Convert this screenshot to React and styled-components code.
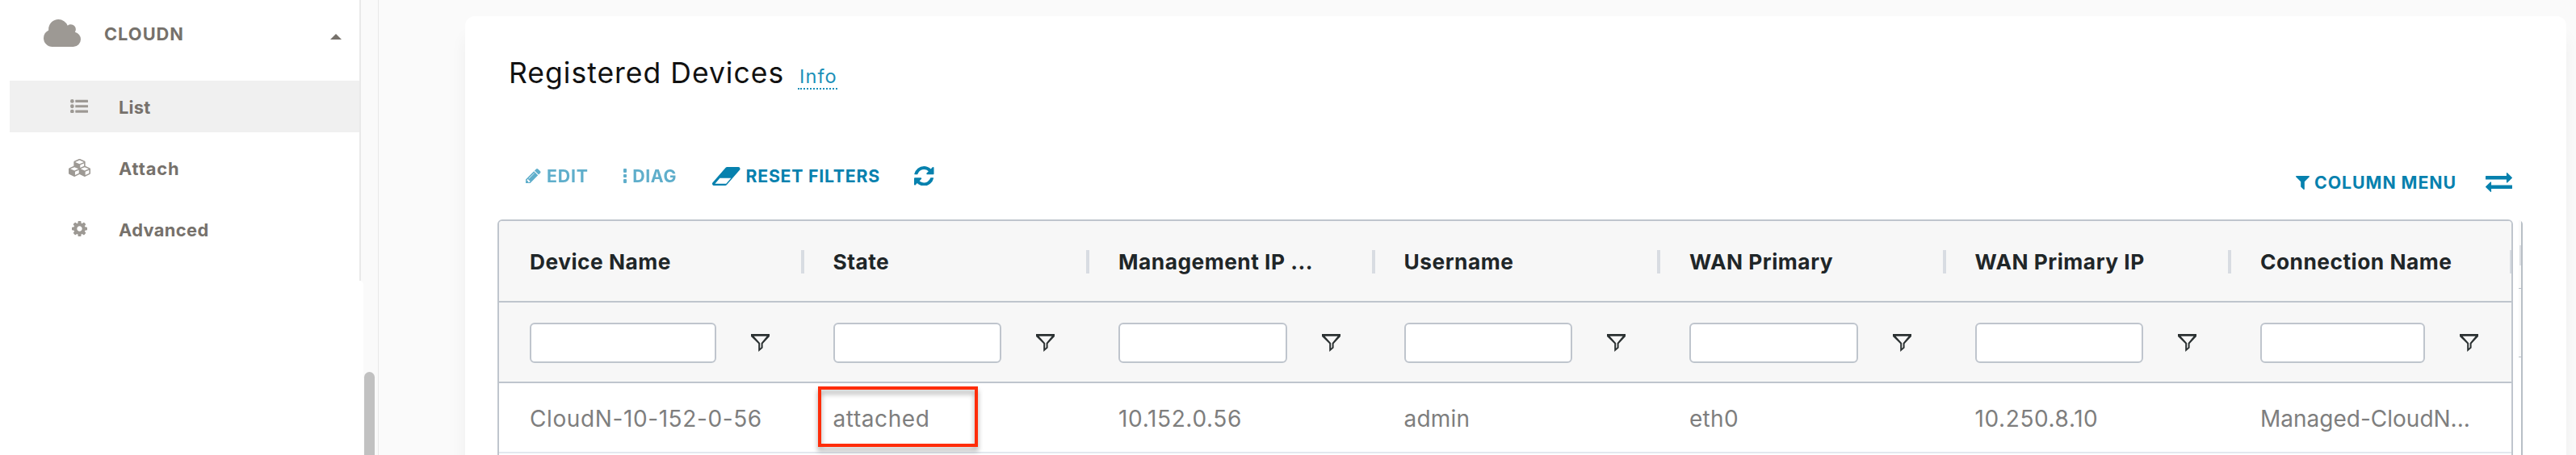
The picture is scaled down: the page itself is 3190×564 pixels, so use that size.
import React from "react";
import styled, { createGlobalStyle } from "styled-components";

const GlobalStyle = createGlobalStyle`
  * { box-sizing: border-box; }
  body { margin: 0; background: #fafafa; font-family: Inter, "Liberation Sans", sans-serif; overflow: hidden; }
`;

const Page = styled.div`
  display: flex;
  width: 3190px;
  height: 564px;
  overflow: hidden;
  background: #fafafa;
`;

/* ---------- sidebar ---------- */
const Sidebar = styled.nav`
  flex: none;
  display: flex;
  flex-direction: column;
  width: 450px;
  height: 564px;
`;

const Menu = styled.div`
  width: 447px;
  height: 348px;
  background: #fff;
  border-right: 2px solid #e9e9e9;
`;

const MenuFooter = styled.div`
  flex: 1;
  width: 450px;
  background: #fff;
  border-top-right-radius: 5px;
`;

const Group = styled.div`
  display: flex;
  align-items: center;
  height: 84px;
  margin-bottom: 16px;
  padding: 0 22px 0 54px;
`;

const GroupLabel = styled.span`
  flex: 1;
  margin: 0 0 0 29px;
  color: #76716b;
  font-size: 21.8px;
  font-weight: 700;
  line-height: 28px;
  letter-spacing: 1px;
`;

const Caret = styled.i`
  margin-top: 7px;
  border: 7px solid transparent;
  border-top: 0;
  border-bottom: 7px solid #76716b;
`;

const Item = styled.div`
  display: flex;
  align-items: center;
  height: 64px;
  margin: 0 0 12px 12px;
  background: ${(p) => (p.$active ? "#f0f0f0" : "transparent")};
`;

const ItemIcon = styled.span`
  display: flex;
  justify-content: center;
  width: 30px;
  margin: -1px 0 0 71px;
  color: #9d9994;
`;

const ItemLabel = styled.span`
  margin: 2px 0 0 34px;
  color: #76716b;
  font-size: 21.8px;
  font-weight: 700;
  line-height: 28px;
  letter-spacing: ${(p) => p.$track || 0}px;
`;

const ScrollTrack = styled.div`
  flex: none;
  display: flex;
  align-items: flex-end;
  width: 19px;
  height: 564px;
  padding-left: 1px;
  border-right: 1px solid #e9e9e9;
`;

const ScrollThumb = styled.div`
  width: 13px;
  height: 103px;
  border-radius: 7px 7px 0 0;
  background: #c1c1c1;
`;

/* ---------- content card ---------- */
const Card = styled.main`
  width: 2602px;
  height: 600px;
  margin: 20px 0 0 107px;
  padding: 0 53px 0 40px;
  border-radius: 12px;
  background: #fff;
  box-shadow: 0 24px 20px rgba(0, 0, 0, 0.05);
`;

const Heading = styled.header`
  display: flex;
  align-items: baseline;
  height: 163px;
  padding: 50px 0 0 14px;
`;

const Title = styled.h1`
  width: 340px;
  margin: 0;
  color: #111;
  font-size: 35.5px;
  font-weight: 400;
  line-height: 42px;
  letter-spacing: 1px;
  white-space: nowrap;
`;

const InfoLink = styled.a`
  margin-left: 18px;
  padding: 0 0 0 2px;
  border-bottom: 2px dotted #1a8fb8;
  color: #1a8fb8;
  font-size: 23.5px;
  font-weight: 400;
  line-height: 29px;
  letter-spacing: 1.1px;
`;

const Toolbar = styled.div`
  display: flex;
  justify-content: space-between;
  height: 89px;
  padding: 20px 14px 0 35px;
`;

const ToolGroup = styled.div`
  display: flex;
  align-items: center;
  height: 30px;
  margin-top: ${(p) => p.$drop || 0}px;
`;

const Tool = styled.span`
  display: flex;
  align-items: center;
  gap: ${(p) => p.$gap || 0}px;
  margin-left: ${(p) => p.$before || 0}px;
  color: #0681ae;
  opacity: ${(p) => (p.$disabled ? 0.64 : 1)};
  font-size: 21.3px;
  font-weight: 700;
  line-height: 28px;
  letter-spacing: ${(p) => p.$track || 0}px;
  white-space: nowrap;
`;

const Dots = styled.span`
  display: flex;
  flex-direction: column;
  gap: 2px;
`;

const Dot = styled.i`
  width: 4.5px;
  height: 4.5px;
  border-radius: 1px;
  background: currentColor;
`;

/* ---------- grid ---------- */
const GridArea = styled.div`
  display: flex;
  align-items: flex-start;
  gap: 7px;
`;

const Grid = styled.section`
  flex: none;
  width: 2496px;
  height: 320px;
  border: 2px solid #bfc5cd;
  border-radius: 6px;
  overflow: hidden;
  background: #fff;
`;

const Row = styled.div`
  display: grid;
  grid-template-columns: 375.5px repeat(5, 353.5px) 349px;
  height: ${(p) => p.$h}px;
  background: ${(p) => (p.$head ? "#f7f7f7" : "#fff")};
  border-bottom: 2px solid ${(p) => (p.$head ? "#bfc5cd" : "#e3e8ef")};
`;

const HeadCell = styled.div`
  display: flex;
  align-items: center;
  justify-content: space-between;
  padding: 2px 0 0 38px;
  color: #1f2628;
  font-size: 26.3px;
  font-weight: 700;
  letter-spacing: 0.5px;
  white-space: nowrap;
`;

const Separator = styled.i`
  width: 4px;
  height: 29px;
  margin: 0 -2px 0 0;
  background: #d8dce2;
`;

const FilterCell = styled.div`
  display: flex;
  align-items: center;
  gap: 43px;
  padding: 2px 41px 0 38px;
  color: #2b3132;
`;

const FilterInput = styled.input`
  flex: 1;
  min-width: 0;
  height: 50px;
  padding: 0 10px;
  border: 2px solid #bfc5cd;
  border-radius: 6px;
  background: #fff;
  font: 24px Inter, sans-serif;
`;

const Cell = styled.div`
  position: relative;
  display: flex;
  align-items: center;
  padding: 2px 0 0 38px;
  color: #7e7e7e;
  font-size: 28px;
  letter-spacing: ${(p) => p.$track || 0}px;
  white-space: nowrap;
`;

const Highlight = styled.span`
  position: absolute;
  left: 19px;
  top: 4px;
  width: 198px;
  height: 75px;
  border: 4px solid #ff2d0a;
  filter: drop-shadow(0 5px 3px rgba(0, 0, 0, 0.35));
`;

const EdgeStrip = styled.div`
  flex: none;
  width: 5px;
  height: 320px;
  margin-top: 1px;
  border-right: 2px solid #b8bfc6;
  border-top-right-radius: 6px;
`;

const EdgeBlock = styled.div`
  display: flex;
  justify-content: flex-end;
  align-items: center;
  height: ${(p) => p.$h}px;
  background: #fafafa;
  border-bottom: 1px solid #b8bfc6;
`;

const EdgeMark = styled.i`
  width: 2px;
  height: 25px;
  margin-top: 2px;
  background: #dde0e4;
`;

/* ---------- icons ---------- */
const Glyph = styled.svg`
  flex: none;
  display: block;
  width: ${(p) => p.$w}px;
  height: ${(p) => p.$h}px;
  fill: currentColor;
`;

const Icon = ({ w, h, box, d }) => (
  <Glyph $w={w} $h={h} viewBox={box} preserveAspectRatio="none">
    <path d={d} />
  </Glyph>
);

const CloudBadge = styled.span`
  margin-top: -2px;
  color: #9d9994;
`;

const CloudIcon = () => (
  <Icon w={46} h={34} box="64 128 1920 1408" d="M1984 1152q0 159-112.5 271.5t-271.5 112.5h-1088q-185 0-316.5-131.5t-131.5-316.5q0-132 71-241.5t187-163.5q-2-28-2-43 0-212 150-362t362-150q158 0 286.5 88t187.5 230q70-62 166-62 106 0 181 75t75 181q0 75-41 138 129 30 213 134.5t84 239.5z" />
);

const ListIcon = () => (
  <Glyph $w={22} $h={17.5} viewBox="0 192 1792 1408" preserveAspectRatio="none">
    {[384, 896, 1408].map((y) => (
      <React.Fragment key={y}>
        <circle cx="192" cy={y} r="192" />
        <rect x="512" y={y - 128} width="1280" height="256" rx="32" />
      </React.Fragment>
    ))}
  </Glyph>
);

const CubesIcon = () => (
  <Icon w={27} h={22} box="0 0 2176 1790" d="M640 1632l384-192v-314l-384 164v342zm-64-454l404-173-404-173-404 173zm1088 454l384-192v-314l-384 164v342zm-64-454l404-173-404-173-404 173zm-448-293l384-165v-266l-384 164v267zm-64-379l441-189-441-189-441 189zm1088 518v416q0 36-19 67t-52 47l-448 224q-25 14-57 14t-57-14l-448-224q-4-2-7-4-2 2-7 4l-448 224q-25 14-57 14t-57-14l-448-224q-33-16-52-47t-19-67v-416q0-38 21.5-70t56.5-48l434-186v-400q0-38 21.5-70t56.5-48l448-192q23-10 50-10t50 10l448 192q35 16 56.5 48t21.5 70v400l434 186q36 16 57 48t21 70z" />
);

const CogIcon = () => (
  <Icon w={19} h={19} box="128 128 1536 1536" d="M1152 896q0-106-75-181t-181-75-181 75-75 181 75 181 181 75 181-75 75-181zm512-109v222q0 12-8 23t-20 13l-185 28q-19 54-39 91 35 50 107 138 10 12 10 25t-9 23q-27 37-99 108t-94 71q-12 0-26-9l-138-108q-44 23-91 38-16 136-29 186-7 28-36 28h-222q-14 0-24.5-8.5t-11.5-21.5l-28-184q-49-16-90-37l-141 107q-10 9-25 9-14 0-25-11-126-114-165-168-7-10-7-23 0-12 8-23 15-21 51-66.5t54-70.5q-27-50-41-99l-183-27q-13-2-21-12.5t-8-23.5v-222q0-12 8-23t19-13l186-28q14-46 39-92-40-57-107-138-10-12-10-24 0-10 9-23 26-36 98.5-107.5t94.5-71.5q13 0 26 10l138 107q44-23 91-38 16-136 29-186 7-28 36-28h222q14 0 24.5 8.5t11.5 21.5l28 184q49 16 90 37l142-107q9-9 24-9 13 0 25 10 129 119 165 170 7 8 7 22 0 12-8 23-15 21-51 66.5t-54 70.5q26 50 41 98l183 28q13 2 21 12.5t8 23.5z" />
);

const PencilIcon = () => (
  <Icon w={18.5} h={18.5} box="128 149 1515 1515" d="M491 1536l91-91-235-235-91 91v107h128v128h107zm523-928q0-22-22-22-10 0-17 7l-542 542q-7 7-7 17 0 22 22 22 10 0 17-7l542-542q7-7 7-17zm-54-192l416 416-832 832h-416v-416zm683 96q0 53-37 90l-166 166-416-416 166-165q36-38 90-38 53 0 91 38l235 234q37 39 37 91z" />
);

const EraserIcon = () => (
  <Icon w={34.5} h={23} box="0 256 1920 1280" d="M960 1408l336-384h-768l-336 384h768zM1909 331q15 34 9.5 71.5t-30.5 65.5l-896 1024q-38 44-96 44h-768q-38 0-69.5-20.5t-47.5-54.5q-15-34-9.5-71.5t30.5-65.5l896-1024q38-44 96-44h768q38 0 69.5 20.5t47.5 54.5z" />
);

const RefreshIcon = () => (
  <Icon w={24.5} h={24.5} box="128 128 1536 1536" d="M1639 1056q0 5-1 7-64 268-268 434.5t-478 166.5q-146 0-282.5-55t-243.5-157l-129 129q-19 19-45 19t-45-19-19-45v-448q0-26 19-45t45-19h448q26 0 45 19t19 45-19 45l-137 137q71 66 161 102t187 36q134 0 250-65t186-179q11-17 53-117 8-23 30-23h192q13 0 22.5 9.5t9.5 22.5zm25-800v448q0 26-19 45t-45 19h-448q-26 0-45-19t-19-45 19-45l138-138q-148-137-349-137-134 0-250 65t-186 179q-11 17-53 117-8 23-30 23h-199q-13 0-22.5-9.5t-9.5-22.5v-7q65-268 270-434.5t480-166.5q146 0 284 55.5t245 156.5l130-129q19-19 45-19t45 19 19 45z" />
);

const FunnelIcon = () => (
  <Icon w={17} h={17} box="192 256 1408 1408" d="M1595 295q17 41-14 70l-493 493v742q0 42-39 59-13 5-25 5-27 0-45-19l-256-256q-19-19-19-45v-486l-493-493q-31-29-14-70 17-39 59-39h1280q42 0 59 39z" />
);

const ExchangeIcon = () => (
  <Icon w={33} h={24} box="0 288 1792 1344" d="M1792 1184v192q0 13-9.5 22.5t-22.5 9.5h-1376v192q0 13-9.5 22.5t-22.5 9.5q-12 0-24-10l-319-320q-9-9-9-22 0-14 9-23l320-320q9-9 23-9 13 0 22.5 9.5t9.5 22.5v192h1376q13 0 22.5 9.5t9.5 22.5zm0-544q0 14-9 23l-320 320q-9 9-23 9-13 0-22.5-9.5t-9.5-22.5v-192h-1376q-13 0-22.5-9.5t-9.5-22.5v-192q0-13 9.5-22.5t22.5-9.5h1376v-192q0-13 9.5-22.5t22.5-9.5q12 0 24 10l319 319q9 9 9 23z" />
);

const FilterOutlineIcon = () => (
  <Icon w={23} h={22} box="0 0 23 22" d="M0 0H23V3L14.6 12V17.2L9.2 22V12L0 3ZM3.6 2.8L11.2 11.2V17.8L12.6 16.4V11.2L19.6 2.8Z" />
);

/* ---------- data ---------- */
const items = [
  { label: "List", icon: ListIcon, active: true, track: 0.3 },
  { label: "Attach", icon: CubesIcon, track: 0.9 },
  { label: "Advanced", icon: CogIcon, track: 0.4 },
];

const columns = [
  { name: "Device Name", value: "CloudN-10-152-0-56", track: 0.6 },
  { name: "State", value: "attached", marked: true, track: 0.6 },
  { name: "Management IP ...", value: "10.152.0.56", track: 0.65 },
  { name: "Username", value: "admin", track: 0.2 },
  { name: "WAN Primary", value: "eth0", track: 0.3 },
  { name: "WAN Primary IP", value: "10.250.8.10", track: 0.6 },
  { name: "Connection Name", value: "Managed-CloudN...", track: 0 },
];

export default function App() {
  return (
    <Page>
      <GlobalStyle />
      <Sidebar>
        <Menu>
          <Group>
            <CloudBadge><CloudIcon /></CloudBadge>
            <GroupLabel>CLOUDN</GroupLabel>
            <Caret />
          </Group>
          {items.map(({ label, icon: I, active, track }) => (
            <Item key={label} $active={active}>
              <ItemIcon><I /></ItemIcon>
              <ItemLabel $track={track}>{label}</ItemLabel>
            </Item>
          ))}
        </Menu>
        <MenuFooter />
      </Sidebar>
      <ScrollTrack><ScrollThumb /></ScrollTrack>
      <Card>
        <Heading>
          <Title>Registered Devices</Title>
          <InfoLink>Info</InfoLink>
        </Heading>
        <Toolbar>
          <ToolGroup>
            <Tool $disabled $gap={7.5} $track={0.8}><PencilIcon /><span>EDIT</span></Tool>
            <Tool $disabled $gap={7} $before={43} $track={0.6}>
              <Dots><Dot /><Dot /><Dot /></Dots><span>DIAG</span>
            </Tool>
            <Tool $gap={6.5} $before={44.5} $track={0.75}><EraserIcon /><span>RESET FILTERS</span></Tool>
            <Tool $before={42.5}><RefreshIcon /></Tool>
          </ToolGroup>
          <ToolGroup $drop={8}>
            <Tool $gap={6} $track={0.95}><FunnelIcon /><span>COLUMN MENU</span></Tool>
            <Tool $before={36}><ExchangeIcon /></Tool>
          </ToolGroup>
        </Toolbar>
        <GridArea>
          <Grid>
            <Row $head $h={101}>
              {columns.map((c) => (
                <HeadCell key={c.name}>
                  <span>{c.name}</span><Separator />
                </HeadCell>
              ))}
            </Row>
            <Row $head $h={100}>
              {columns.map((c) => (
                <FilterCell key={c.name}>
                  <FilterInput aria-label={c.name} /><FilterOutlineIcon />
                </FilterCell>
              ))}
            </Row>
            <Row $h={87}>
              {columns.map((c) => (
                <Cell key={c.name} $track={c.track}>
                  {c.value}{c.marked && <Highlight />}
                </Cell>
              ))}
            </Row>
          </Grid>
          <EdgeStrip>
            <EdgeBlock $h={85}><EdgeMark /></EdgeBlock>
            <EdgeBlock $h={85} />
          </EdgeStrip>
        </GridArea>
      </Card>
    </Page>
  );
}
